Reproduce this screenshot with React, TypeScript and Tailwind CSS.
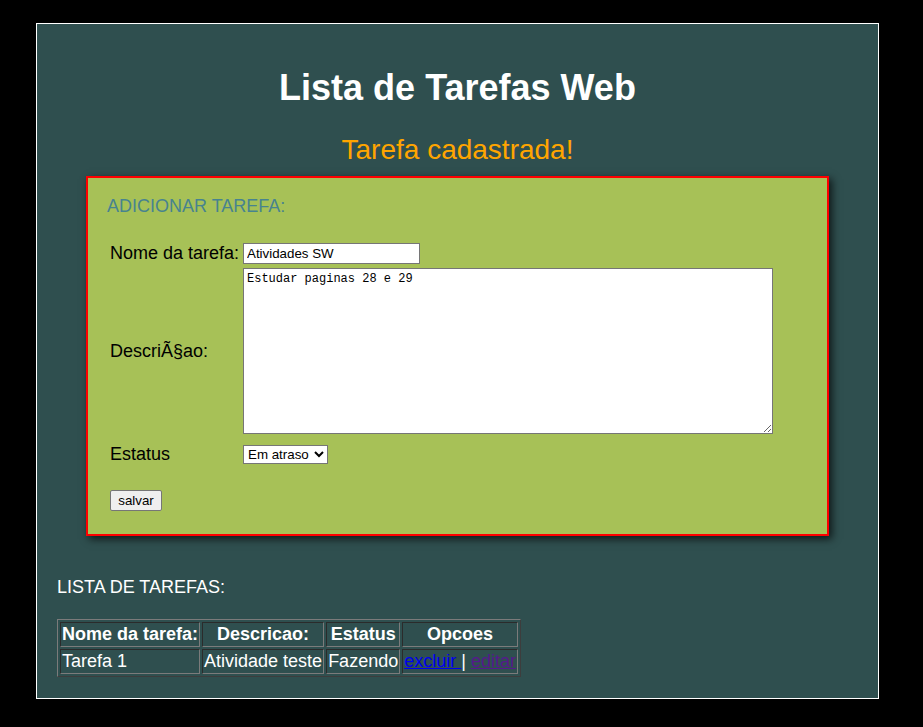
const FONT = "font-['Liberation_Sans',Arial,sans-serif]";

const TAREFAS = [
  { nome: "Tarefa 1", descricao: "Atividade teste", estatus: "Fazendo" },
];

export default function App() {
  return (
    <div className={`min-h-[727px] bg-black pt-[23px] pl-[36px] ${FONT}`}>
      <div className="h-[676px] w-[843px] border border-white bg-[#2f4f4f] px-[20px]">
        {/* cabecalho */}
        <h1 className="mt-[44px] text-center text-[36px] leading-[40px] font-bold text-white">
          Lista de Tarefas Web
        </h1>
        <h2 className="mt-[26px] text-center text-[28px] leading-[32px] text-[#ffa500]">
          Tarefa cadastrada!
        </h2>

        {/* formulario */}
        <div className="mt-[10px] ml-[29px] w-[743px] border-2 border-[#ff0000] bg-[#a7c157] pt-[18px] pb-[23px] pl-[19px] shadow-[3px_3px_8px_rgba(0,0,0,0.7)]">
          <p className="text-[18px] leading-[21px] text-[#47838f]">ADICIONAR TAREFA:</p>

          <form className="mt-[26px] pl-[3px] text-[18px] leading-[21px] text-black">
            <div className="flex items-center">
              <label className="w-[133px]">Nome da tarefa:</label>
              <input
                className="h-[21px] w-[177px] border border-[#767676] bg-white px-[3px] text-[13.33px] text-black"
                defaultValue="Atividades SW"
              />
            </div>
            <div className="mt-[4px] flex items-center">
              <label className="w-[133px]">DescriÃ§ao:</label>
              <textarea
                className="h-[166px] w-[530px] border border-[#767676] bg-white px-[3px] py-[3px] font-['Liberation_Mono',monospace] text-[12px] leading-[15px] text-black"
                defaultValue="Estudar paginas 28 e 29"
              />
            </div>
            <div className="mt-[10px] flex items-center">
              <label className="w-[133px]">Estatus</label>
              <select
                className="h-[19px] w-[85px] border border-[#767676] bg-white text-[13.33px] leading-[15px] text-black"
                defaultValue="atraso"
              >
                <option value="fazer">A fazer</option>
                <option value="fazendo">Fazendo</option>
                <option value="atraso">Em atraso</option>
                <option value="feito">Feito</option>
              </select>
            </div>
            <button
              type="button"
              className="mt-[25px] h-[21px] w-[52px] rounded-[2px] border border-[#767676] bg-[#efefef] text-[13.33px] leading-[15px] text-black"
            >
              salvar
            </button>
          </form>
        </div>

        {/* lista */}
        <p className="mt-[41px] text-[18px] leading-[21px] text-white">LISTA DE TAREFAS:</p>

        <table className="mt-[21px] border-separate border-spacing-[2px] border border-t-[#7b7b7b] border-l-[#7b7b7b] border-r-[#3d3d3d] border-b-[#3d3d3d] text-[18px] leading-[21px] text-white">
          <thead>
            <tr>
              {["Nome da tarefa:", "Descricao:", "Estatus", "Opcoes"].map((h) => (
                <th
                  key={h}
                  className="border border-t-[#2b2b2b] border-l-[#2b2b2b] border-r-[#7b7b7b] border-b-[#7b7b7b] p-px text-center font-bold"
                >
                  {h}
                </th>
              ))}
            </tr>
          </thead>
          <tbody>
            {TAREFAS.map((t) => (
              <tr key={t.nome}>
                <td className="border border-t-[#2b2b2b] border-l-[#2b2b2b] border-r-[#7b7b7b] border-b-[#7b7b7b] p-px">
                  {t.nome}
                </td>
                <td className="border border-t-[#2b2b2b] border-l-[#2b2b2b] border-r-[#7b7b7b] border-b-[#7b7b7b] p-px">
                  {t.descricao}
                </td>
                <td className="border border-t-[#2b2b2b] border-l-[#2b2b2b] border-r-[#7b7b7b] border-b-[#7b7b7b] p-px">
                  {t.estatus}
                </td>
                <td className="border border-t-[#2b2b2b] border-l-[#2b2b2b] border-r-[#7b7b7b] border-b-[#7b7b7b] p-px whitespace-pre">
                  <a href="#" className="text-[#0000ee] underline">excluir </a>| <a href="#" className="text-[#551a8b] underline">editar</a>
                </td>
              </tr>
            ))}
          </tbody>
        </table>
      </div>
    </div>
  );
}
